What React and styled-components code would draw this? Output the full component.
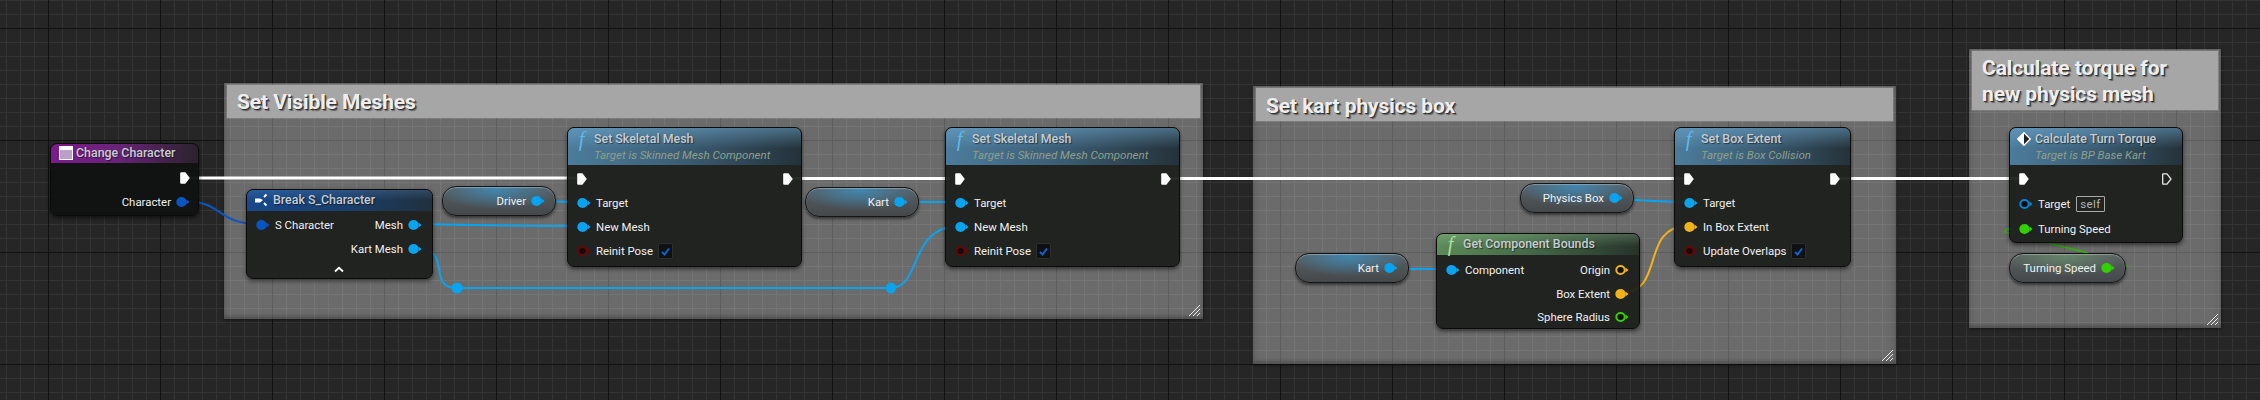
import React from "react";
import styled, { createGlobalStyle } from "styled-components";

const Global = createGlobalStyle`
  html, body { margin: 0; padding: 0; background: #262626; }
  #root { width: 2260px; height: 400px; overflow: hidden; }
`;

const Canvas = styled.div`
  position: relative;
  width: 2260px;
  height: 400px;
  overflow: hidden;
  font-family: Roboto, "Liberation Sans", sans-serif;
  background-color: #262626;
  background-image:
    linear-gradient(#111111 1px, transparent 1px),
    linear-gradient(90deg, #111111 1px, transparent 1px),
    linear-gradient(#343434 1px, transparent 1px),
    linear-gradient(90deg, #343434 1px, transparent 1px);
  background-size: 112px 112px, 112px 112px, 14px 14px, 14px 14px;
  background-position: 0 28px, 48px 0, 0 0, 6px 0;
`;

const Comment = styled.section`
  position: absolute;
  left: ${(p) => p.$x}px;
  top: ${(p) => p.$y}px;
  width: ${(p) => p.$w}px;
  height: ${(p) => p.$h}px;
  box-sizing: border-box;
  padding: 2px 3px;
  background: rgba(255, 255, 255, 0.32);
  box-shadow: inset 0 0 8px rgba(0, 0, 0, 0.16), inset 0 -3px 3px rgba(0, 0, 0, 0.16), 0 1px 3px rgba(0, 0, 0, 0.5);
`;

const CommentTitle = styled.h2`
  margin: 0;
  box-sizing: border-box;
  height: ${(p) => p.$h}px;
  padding: ${(p) => p.$pt}px 0 0 10px;
  background: #a6a6a6;
  box-shadow: 0 0 0 1px rgba(255, 255, 255, 0.12);
  color: #eeeeee;
  font-size: 21px;
  line-height: 25.5px;
  font-weight: 700;
  letter-spacing: -0.1px;
  text-shadow: 1px 1px 0 #333, 2px 2px 1px rgba(0, 0, 0, 0.4);
`;

const Grip = styled.svg`
  position: absolute;
  right: 3px;
  bottom: 3px;
  width: 11px;
  height: 11px;
`;

const Wires = styled.svg`
  position: absolute;
  left: 0;
  top: 0;
  width: 2260px;
  height: 400px;
`;

const Node = styled.article`
  position: absolute;
  left: ${(p) => p.$x}px;
  top: ${(p) => p.$y}px;
  width: ${(p) => p.$w}px;
  height: ${(p) => p.$h}px;
  box-sizing: border-box;
  border: 1px solid #0b0b0b;
  border-radius: 7px;
  background: ${(p) => p.$bg || "rgba(30, 32, 30, 0.95)"};
  box-shadow: 0 2px 4px rgba(0, 0, 0, 0.55);
  overflow: hidden;
  display: flex;
  flex-direction: column;
`;

const heads = {
  blue: `linear-gradient(180deg, rgba(120,180,220,.45) 0, rgba(120,180,220,0) 55%), linear-gradient(90deg, #4c7c9c 0, #3d6078 45%, #24323a 100%)`,
  navy: `linear-gradient(180deg, rgba(120,170,230,.2) 0, rgba(0,0,0,0) 50%), linear-gradient(90deg, #16498c 0, #1a3f6e 50%, #20303e 100%)`,
  green: `linear-gradient(180deg, rgba(170,220,170,.25) 0, rgba(0,0,0,0) 60%), linear-gradient(90deg, #5c8a58 0, #456a48 45%, #27332a 100%)`,
  purple: `linear-gradient(90deg, #7d1a8e 0, #6a2378 45%, #2a222c 100%)`,
};

const Header = styled.header`
  flex: none;
  box-sizing: border-box;
  height: ${(p) => p.$h}px;
  display: flex;
  gap: ${(p) => p.$gap ?? 5}px;
  padding: ${(p) => p.$pt ?? 3}px 6px 0 ${(p) => p.$pl ?? 8}px;
  background: ${(p) => heads[p.$tone]};
`;

const IconSlot = styled.span`
  flex: none;
  width: ${(p) => p.$w}px;
  height: 16px;
  display: flex;
  align-items: center;
  justify-content: center;
`;

const FnGlyph = styled.span`
  font-family: "Liberation Serif", serif;
  font-style: italic;
  font-size: 20px;
  line-height: 16px;
  color: ${(p) => p.$c};
`;

const Titles = styled.div`
  display: flex;
  flex-direction: column;
`;

const Title = styled.div`
  height: 16px;
  line-height: 16px;
  font-size: 12.4px;
  font-weight: 500;
  white-space: nowrap;
  color: #c6ccd2;
  text-shadow: 1px 1px 1px rgba(0, 0, 0, 0.5);
`;

const Subtitle = styled.div`
  height: 16px;
  line-height: 16px;
  font-size: 11.5px;
  font-style: italic;
  white-space: nowrap;
  color: #8f9f8a;
`;

const Body = styled.div`
  flex: 1;
  display: flex;
  flex-direction: column;
  padding: ${(p) => p.$pt ?? 2}px ${(p) => p.$pr ?? 10}px 0 9px;
`;

const Row = styled.div`
  flex: none;
  height: ${(p) => p.$h ?? 24}px;
  display: flex;
  align-items: center;
  justify-content: space-between;
  gap: 6px;
`;

const Side = styled.div`
  display: flex;
  align-items: center;
  gap: 5px;
`;

const Label = styled.span`
  font-size: 11.4px;
  line-height: 16px;
  white-space: nowrap;
  color: #f0f0f0;
`;

const PinSvg = styled.svg`
  flex: none;
  display: block;
  width: 14px;
  height: 12px;
`;

const Pin = ({ c, hollow }) => (
  <PinSvg viewBox="0 0 14 12">
    <path d="M10.5 3.5 L13.5 6 L10.5 8.5 Z" fill={c} />
    <ellipse cx="5.5" cy="6" rx={hollow ? 4.2 : 5.2} ry={hollow ? 4 : 5} fill={hollow ? "#120c0a" : c} stroke={hollow ? c : "none"} strokeWidth={hollow ? 2 : 0} />
  </PinSvg>
);

const ExecSvg = styled.svg`
  flex: none;
  display: block;
  width: 10px;
  height: 12px;
  margin-right: ${(p) => p.$nudge ?? 0}px;
`;

const Exec = ({ hollow, nudge }) => (
  <ExecSvg viewBox="0 0 10 12" $nudge={nudge}>
    <path
      d={hollow ? "M1.2 .8 H5 L9 6 L5 11.2 H1.2 Q.7 11.2 .7 10.6 V1.4 Q.7 .8 1.2 .8 Z" : "M1.2 .3 H5.4 L9.8 6 L5.4 11.7 H1.2 Q.2 11.7 .2 10.7 V1.3 Q.2 .3 1.2 .3 Z"}
      fill={hollow ? "none" : "#ffffff"}
      stroke={hollow ? "#e8e8e8" : "none"}
      strokeWidth="1.3"
    />
  </ExecSvg>
);

const Checkbox = styled.span`
  flex: none;
  box-sizing: border-box;
  width: 15px;
  height: 16px;
  border: 1px solid #2c2e2e;
  border-radius: 2px;
  background: #0e1013;
  display: flex;
  align-items: center;
  justify-content: center;
`;

const Check = () => (
  <Checkbox>
    <svg width="11" height="11" viewBox="0 0 11 11">
      <path d="M2 6 L4.5 8.5 L9 2.5" fill="none" stroke="#0b62d6" strokeWidth="2" />
    </svg>
  </Checkbox>
);

const SelfBox = styled.span`
  box-sizing: border-box;
  height: 16px;
  padding: 0 3px;
  margin-left: 1px;
  border: 1px solid #a8a8a8;
  border-radius: 1px;
  font-size: 11.5px;
  line-height: 14px;
  letter-spacing: 0.4px;
  color: #b4b4b4;
`;

const Chevron = styled.div`
  flex: none;
  height: 18px;
  display: flex;
  align-items: center;
  justify-content: center;
`;

const pillGlow = {
  blue: "rgba(56, 150, 205, 0.7)",
  green: "rgba(120, 190, 120, 0.4)",
};

const Pill = styled.div`
  position: absolute;
  left: ${(p) => p.$x}px;
  top: ${(p) => p.$y}px;
  width: ${(p) => p.$w}px;
  height: 30px;
  box-sizing: border-box;
  border: 1.5px solid #151515;
  border-radius: 14px;
  padding-right: 10px;
  display: flex;
  align-items: center;
  justify-content: flex-end;
  gap: 5px;
  background:
    radial-gradient(ellipse 55% 70% at 48% 10%, ${(p) => pillGlow[p.$tone]} 0, rgba(0, 0, 0, 0) 100%),
    linear-gradient(180deg, #5a5f62 0, #44484b 100%);
  box-shadow: inset 0 1px 1px rgba(255, 255, 255, 0.3), 0 2px 3px rgba(0, 0, 0, 0.5);
`;

const BLUE = "#08a4f0";
const DEEP = "#0756c4";
const AMBER = "#f0b418";
const GREEN = "#33d000";
const RED = "#6a0606";

const Grp = () => (
  <Grip viewBox="0 0 11 11">
    <path d="M0 11 L11 0 M4 11 L11 4 M8 11 L11 8" stroke="#e8e8e8" strokeWidth="1" />
  </Grip>
);

const EventIcon = () => (
  <svg width="14" height="14" viewBox="0 0 14 14">
    <rect x=".5" y=".5" width="13" height="13" fill="#b9a0c4" stroke="#fff" />
    <rect x="0" y="0" width="14" height="4" fill="#fff" />
  </svg>
);

const BreakIcon = () => (
  <svg width="14" height="14" viewBox="0 0 14 14">
    <path d="M0 5.5 H5 L8 7 L5 9.5 H0 Q-.5 7.5 0 5.5 Z" fill="#fff" />
    <path d="M9 4 L11.5 1.5 M9 10 L11.5 12.5" stroke="#fff" strokeWidth="1.8" />
  </svg>
);

const DiamondIcon = () => (
  <svg width="14" height="14" viewBox="0 0 14 14">
    <path d="M7 .7 L13.3 7 L7 13.3 L.7 7 Z" fill="#1c2226" stroke="#fff" strokeWidth="1.4" />
    <path d="M7 .7 L.7 7 L7 13.3 Z" fill="#fff" />
  </svg>
);

const Fn = ({ c }) => (
  <IconSlot $w={15}>
    <FnGlyph $c={c}>f</FnGlyph>
  </IconSlot>
);

const SkeletalMesh = ({ x }) => (
  <Node $x={x} $y={127} $w={235} $h={140}>
    <Header $h={37} $tone="blue" $pl={6}>
      <Fn c="#62b8ea" />
      <Titles>
        <Title>Set Skeletal Mesh</Title>
        <Subtitle>Target is Skinned Mesh Component</Subtitle>
      </Titles>
    </Header>
    <Body>
      <Row><Exec /><Exec nudge={-2} /></Row>
      <Row><Side><Pin c={BLUE} /><Label>Target</Label></Side></Row>
      <Row><Side><Pin c={BLUE} /><Label>New Mesh</Label></Side></Row>
      <Row><Side><Pin c={RED} hollow /><Label>Reinit Pose</Label><Check /></Side></Row>
    </Body>
  </Node>
);

export default function App() {
  return (
    <Canvas>
      <Global />

      <Comment $x={224} $y={83} $w={979} $h={236}>
        <CommentTitle $h={33} $pt={5}>Set Visible Meshes</CommentTitle>
        <Grp />
      </Comment>
      <Comment $x={1253} $y={86} $w={643} $h={278}>
        <CommentTitle $h={33} $pt={6}>Set kart physics box</CommentTitle>
        <Grp />
      </Comment>
      <Comment $x={1969} $y={49} $w={252} $h={279}>
        <CommentTitle $h={59} $pt={5}>Calculate torque for<br />new physics mesh</CommentTitle>
        <Grp />
      </Comment>

      <Wires viewBox="0 0 2260 400">
        <g fill="none" stroke="#ffffff" strokeWidth="3">
          <path d="M186 178 H582" />
          <path d="M787 178.5 H950" />
          <path d="M1165 178.5 H1688" />
          <path d="M1836 178.5 H2025" />
        </g>
        <g fill="none" stroke={BLUE} strokeWidth="2">
          <path d="M414 224 C480 225 520 226 582 226" />
          <path d="M536 201 C550 201 565 202 582 202" />
          <path d="M414 247 C455 248 425 288 457 288 H891 C922 288 908 226 960 226" />
          <path d="M900 202 H960" />
          <path d="M1614 199 C1640 200 1660 202 1688 202" />
          <path d="M1390 269 H1450" />
        </g>
        <path d="M182 201 C225 201 215 224 260 224" fill="none" stroke={DEEP} strokeWidth="2" />
        <path d="M1623 292 C1665 292 1640 226 1688 226" fill="none" stroke={AMBER} strokeWidth="2" />
        <path d="M2106 268 L2128 266 L2084 252 L2005 232 L2006 229 L2024 229" fill="none" stroke="#2cb800" strokeWidth="1.5" />
        <g fill={BLUE}>
          <circle cx="457" cy="288" r="5.5" />
          <path d="M461 285 L465 288 L461 291 Z" />
          <ellipse cx="891" cy="288" rx="5" ry="5.5" />
        </g>
      </Wires>

      <Node $x={50} $y={143} $w={149} $h={73} $bg="rgba(17, 19, 18, 0.96)">
        <Header $h={19} $tone="purple" $pt={1} $pl={7} $gap={3}>
          <IconSlot $w={15}><EventIcon /></IconSlot>
          <Titles><Title>Change Character</Title></Titles>
        </Header>
        <Body $pt={3} $pr={8}>
          <Row $h={24}><span /><Exec /></Row>
          <Row $h={23}><span /><Side><Label>Character</Label><Pin c={DEEP} /></Side></Row>
        </Body>
      </Node>

      <Node $x={246} $y={189} $w={187} $h={90}>
        <Header $h={21} $tone="navy" $pt={2} $pl={8} $gap={4}>
          <IconSlot $w={14}><BreakIcon /></IconSlot>
          <Titles><Title>Break S_Character</Title></Titles>
        </Header>
        <Body $pt={2}>
          <Row $h={24}>
            <Side><Pin c={DEEP} /><Label>S Character</Label></Side>
            <Side><Label>Mesh</Label><Pin c={BLUE} /></Side>
          </Row>
          <Row $h={23}>
            <span />
            <Side><Label>Kart Mesh</Label><Pin c={BLUE} /></Side>
          </Row>
          <Chevron>
            <svg width="10" height="7" viewBox="0 0 10 7">
              <path d="M1 5.5 L5 1.8 L9 5.5" fill="none" stroke="#fff" strokeWidth="1.8" />
            </svg>
          </Chevron>
        </Body>
      </Node>

      <Pill $x={442} $y={186} $w={114} $tone="blue"><Label>Driver</Label><Pin c={BLUE} /></Pill>
      <SkeletalMesh x={567} />
      <Pill $x={805} $y={187} $w={114} $tone="blue"><Label>Kart</Label><Pin c={BLUE} /></Pill>
      <SkeletalMesh x={945} />

      <Pill $x={1520} $y={183} $w={114} $tone="blue"><Label>Physics Box</Label><Pin c={BLUE} /></Pill>
      <Pill $x={1295} $y={253} $w={114} $tone="blue"><Label>Kart</Label><Pin c={BLUE} /></Pill>

      <Node $x={1436} $y={233} $w={204} $h={96}>
        <Header $h={21} $tone="green" $pt={2} $pl={6}>
          <Fn c="#a8e0a0" />
          <Titles><Title>Get Component Bounds</Title></Titles>
        </Header>
        <Body $pt={3}>
          <Row $h={24}>
            <Side><Pin c={BLUE} /><Label>Component</Label></Side>
            <Side><Label>Origin</Label><Pin c={AMBER} hollow /></Side>
          </Row>
          <Row $h={23}><span /><Side><Label>Box Extent</Label><Pin c={AMBER} /></Side></Row>
          <Row $h={24}><span /><Side><Label>Sphere Radius</Label><Pin c={GREEN} hollow /></Side></Row>
        </Body>
      </Node>

      <Node $x={1674} $y={127} $w={177} $h={140}>
        <Header $h={37} $tone="blue" $pl={6}>
          <Fn c="#62b8ea" />
          <Titles>
            <Title>Set Box Extent</Title>
            <Subtitle>Target is Box Collision</Subtitle>
          </Titles>
        </Header>
        <Body>
          <Row><Exec /><Exec /></Row>
          <Row><Side><Pin c={BLUE} /><Label>Target</Label></Side></Row>
          <Row><Side><Pin c={AMBER} /><Label>In Box Extent</Label></Side></Row>
          <Row><Side><Pin c={RED} hollow /><Label>Update Overlaps</Label><Check /></Side></Row>
        </Body>
      </Node>

      <Node $x={2009} $y={127} $w={174} $h={116}>
        <Header $h={37} $tone="blue" $pl={7} $gap={4}>
          <IconSlot $w={14}><DiamondIcon /></IconSlot>
          <Titles>
            <Title>Calculate Turn Torque</Title>
            <Subtitle>Target is BP Base Kart</Subtitle>
          </Titles>
        </Header>
        <Body>
          <Row><Exec /><Exec hollow /></Row>
          <Row $h={26}><Side><Pin c="#0a84d0" hollow /><Label>Target</Label><SelfBox>self</SelfBox></Side></Row>
          <Row><Side><Pin c={GREEN} /><Label>Turning Speed</Label></Side></Row>
        </Body>
      </Node>
      <Pill $x={2009} $y={253} $w={117} $tone="green"><Label>Turning Speed</Label><Pin c={GREEN} /></Pill>
    </Canvas>
  );
}
